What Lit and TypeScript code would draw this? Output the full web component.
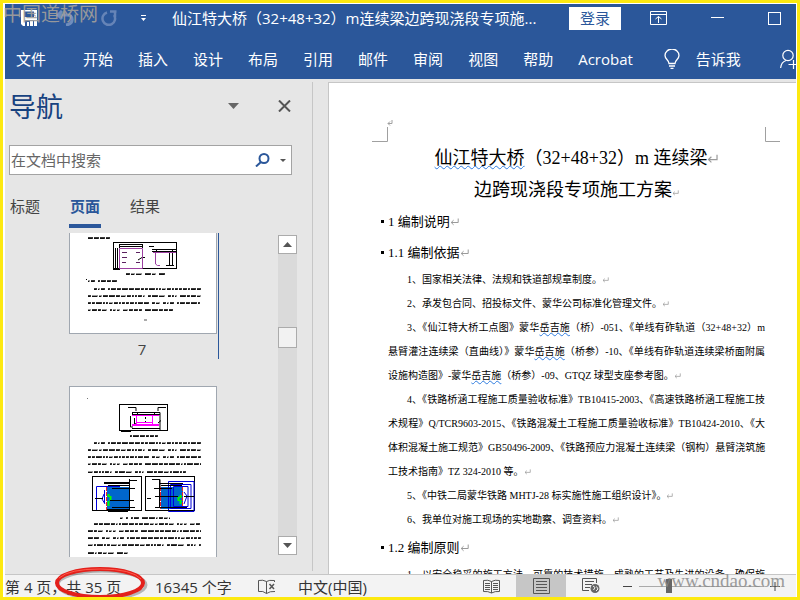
import { LitElement, html, svg, css } from "lit";
import { customElement } from "lit/decorators.js";

const MENU = ["开始", "插入", "设计", "布局", "引用", "邮件", "审阅", "视图", "帮助", "Acrobat"];

const mark = (size = "small") => html`<svg class="mark ${size}" viewBox="0 0 9 8" aria-hidden="true">
  <path d="M8.2 0.5V4.5H1.2M3.6 2.2L1.2 4.5L3.6 6.8" fill="none" stroke="#9a9a9a" stroke-width="1" /></svg>`;

/* A run of miniature text: short dark strokes of varied length. */
const scribble = (x1: number, x2: number, y: number) => {
  const dashes = [];
  let x = x1;
  let seed = y * 7 + x1;
  while (x < x2) {
    seed = (seed * 37 + 11) % 101;
    const w = Math.min(2 + (seed % 5), x2 - x);
    dashes.push(svg`<rect x=${x} y=${y - 1} width=${w} height="2" fill=${seed % 4 ? "#3a3a3a" : "#9a9a9a"} />
      <rect x=${x} y=${y} width=${Math.max(w - 1, 1)} height="1" fill="#111" />`);
    x += w + (seed % 6 === 0 ? 3 : 1);
  }
  return dashes;
};

const pageSeven = svg`
  ${scribble(18, 40, 5)}
  <g fill="none" stroke="#000">
    <rect x="43.5" y="9.5" width="63" height="26" />
    <path d="M49 11.5H73M49 13.5H73M49.5 11V15M72.5 11V15M45.5 15V37M47.5 15V36M43 36.5H50M68 27L72 24.5H75M79 13.5H84M82 16.5H107M82 18.5H107M86.5 16V20M102.5 16V20M99.500 20V33M102.5 20V33M96 32.500H104" />
    <path d="M52 19.500H57M66 19.500H70M52 24.500H57M52 29.500H56M66 29.500H70" stroke="#5b2260" />
  </g>
  <path d="M49.500 15.500H72.500V35.500H49.500ZM83 19.500H106M85.500 20V31L87.500 32.500H90" fill="none" stroke="#9b3fa0" />
  ${scribble(56, 96, 41)}
  <rect x="16" y="46" width="1" height="1" /><g>${scribble(18, 47, 48)}</g>
  ${scribble(24, 131, 56)}${scribble(18, 131, 63)}${scribble(18, 130, 70)}${scribble(18, 103, 77)}
  <rect x="74" y="86" width="3" height="2" fill="#aaa" />`;

const pageEight = svg`
  <rect x="17" y="11" width="1" height="1" fill="#777" />
  <g fill="none" stroke="#000">
    <rect x="49.500" y="17.500" width="48" height="26" />
    <path d="M58 20.500H66V24M96 20.500H88V24M62 25.500H90V43M62.500 25V29M62 27.500H90M60.500 29V40H63M64.500 31V38L67 35M62 41.500H90M67.500 25V29M84.500 25V29M75.500 30V32M75.500 34V36M88 36L91 33.500M51 44.500H61" />
  </g>
  <path d="M62 28.500H89M66.500 29V37M82.500 29V37M67 35.500H82M62 37.500H89M62 38.500H89" fill="none" stroke="#f0f" />
  ${scribble(60, 88, 49)}
  ${scribble(24, 131, 56)}${scribble(18, 131, 63)}${scribble(18, 131, 70)}${scribble(18, 131, 77)}${scribble(18, 117, 85)}
  <g fill="none" stroke="#000"><rect x="22.500" y="89.500" width="49" height="34" /><rect x="75.500" y="89.500" width="49" height="34" /></g>
  <rect x="37" y="100" width="22" height="22" fill="#0066cc" />
  <rect x="91" y="100" width="22" height="22" fill="#0066cc" />
  <path d="M36.500 100V123M59.500 100V122M90.500 100V122M112.500 100V122" stroke="#e22" stroke-dasharray="4 1" />
  <path d="M38.500 107V110M40.500 109V114M38.500 114V119M110.500 108V111M108.500 110V114M110.500 113V117" stroke="#0f0" stroke-width="2" />
  <path d="M26.500 123V99.500H50M34.500 103V116M98.500 94.500H124V124.500H98.500ZM100.500 97.500H121V121.500H100.500ZM103.500 99.500H118V119.500H103.500ZM34 107L32 112L35 117M114 105L117 109L114 117" fill="none" stroke="#00d" />
  <path d="M34 95.500H60M34 96.500H60M38 98.500H59M59.500 92V124M59.500 93.500H67M42 101.500H65M25 111.500H33M40 113.500H64M42 120.500H65M37 122.500H60M38 124.500H58M82 92.500H90V100M89 96.500H113M91 98.500H112M84 101.500H102M77 111.500H81M85 109.500H108M85 120.500H117M89.500 93V121M91 123.500H112M114 109.500H124" fill="none" stroke="#000" />
  ${scribble(50, 100, 131)}
  ${scribble(24, 131, 137)}${scribble(18, 131, 144)}${scribble(18, 131, 151)}${scribble(18, 131, 158)}${scribble(18, 59, 166)}`;

@customElement("word-ribbon")
class WordRibbon extends LitElement {
  static styles = css`
    :host { display: block; background: #2b579a; color: #fff; font: 15px/20px "Open Sans", "Noto Sans CJK SC", sans-serif; }
    button { background: none; border: 0; padding: 0; margin: 0; color: inherit; font: inherit; display: block; white-space: nowrap; }
    svg { display: block; }
    .title { display: flex; align-items: center; height: 28px; padding: 0 15px 0 16px; }
    .quick { display: flex; align-items: center; width: 151px; flex: none; }
    .undo { margin-left: 18px; }
    .redo { margin-left: 26px; }
    .more { margin-left: 23px; }
    .name { flex: 1; min-width: 0; white-space: nowrap; overflow: hidden; font: inherit; margin: 0; }
    .login { background: #fff; color: #2b579a; width: 52px; height: 23px; line-height: 22px; }
    .win { margin-left: 44px; }
    .display { margin-left: 29px; }
    .menu { display: flex; align-items: center; height: 40px; padding: 7px 0 0 11px; }
    .tabs { display: flex; gap: 25px; margin-left: 37px; }
    .tell { display: flex; align-items: center; gap: 16px; margin-left: 31px; }
    .share { margin-left: auto; }
  `;
  render() {
    return html`
      <div class="title">
        <div class="quick">
          <button aria-label="保存"><svg width="16" height="16" viewBox="0 0 16 16"><path fill="#fff" fill-rule="evenodd" d="M0 0H16V16H13V10H4V16H2L0 14ZM3 1.500V7H13V1.500ZM6 12H8V16H6ZM9 11H12V16H9Z" /></svg></button>
          <button class="undo" aria-label="撤消"><svg width="20" height="16" viewBox="0 0 20 16" fill="none" stroke="#6f8dbd" stroke-width="3"><path d="M3 5H12C19 5 19 14 11 15M7 1L3 5L7 9" /></svg></button>
          <button class="redo" aria-label="重复"><svg width="17" height="16" viewBox="0 0 17 16" fill="none" stroke="#6684b7" stroke-width="2.500"><path d="M6 2.500A6.300 6.300 0 1 0 13 5M9 1.500H15.500M14 1V7" /></svg></button>
          <button class="more" aria-label="自定义快速访问工具栏"><svg width="5" height="6" viewBox="0 0 5 6" fill="#fff"><path d="M0 0H5V1H0ZM0 3H5L2.500 6Z" /></svg></button>
        </div>
        <h1 class="name">仙江特大桥（32+48+32）m连续梁边跨现浇段专项施...</h1>
        <button class="login">登录</button>
        <button class="display" aria-label="功能区显示选项"><svg width="17" height="14" viewBox="0 0 17 14" fill="none" stroke="#fff"><path d="M.5.5H16.500V13.500H.5ZM1 3.500H16M8.500 12V5.500M5.500 8L8.500 5.500L11.500 8" /></svg></button>
        <button class="win" aria-label="最小化"><svg width="13" height="12" viewBox="0 0 13 12"><path fill="#fff" d="M0 5H13V6H0Z" /></svg></button>
        <button class="win" aria-label="最大化"><svg width="13" height="13" viewBox="0 0 13 13"><rect x=".5" y=".5" width="12" height="12" fill="none" stroke="#fff" /></svg></button>
      </div>
      <nav class="menu">
        <button>文件</button>
        <div class="tabs">${MENU.map((m) => html`<button>${m}</button>`)}</div>
        <button class="tell"><svg width="16" height="20" viewBox="0 0 16 20" fill="none" stroke="#fff" stroke-width="1.300"><path d="M5 14.500C5 11 1 10.500 1 6.500A6.500 6 0 0 1 15 6.500C15 10.500 11 11 11 14.500ZM5 17H11M6.500 19.300H9.500" /></svg>告诉我</button>
        <button class="share" aria-label="共享"><svg width="16" height="20" viewBox="0 0 16 20" fill="none" stroke="#fff" stroke-width="1.200"><circle cx="8" cy="6.500" r="5.200" /><path d="M.6 19C1 15 3 12.500 6 11.500M8.500 15.500H16M13.500 11V20" /></svg></button>
      </nav>`;
  }
}

@customElement("nav-pane")
class NavPane extends LitElement {
  static styles = css`
    :host { display: flex; flex-direction: column; min-height: 0; box-sizing: border-box; padding-left: 4px; font: 15px/20px "Open Sans", "Noto Sans CJK SC", sans-serif; color: #444; border-right: 1px solid #c6c6c6; margin-bottom: 3px; }
    button { background: none; border: 0; padding: 0; margin: 0; color: inherit; font: inherit; display: block; }
    svg { display: block; }
    .head { display: flex; align-items: center; height: 40px; padding: 4px 21px 0 0; }
    h2 { flex: 1; margin: 0; font: 27px/40px "Noto Sans CJK SC", sans-serif; color: #17427f; }
    .close { margin-left: 39px; }
    .search { display: flex; align-items: center; box-sizing: border-box; height: 30px; margin: 19px 20px 0 0; border: 1px solid #a3a3a3; background: #fff; padding-right: 5px; }
    input { flex: 1; min-width: 0; border: 0; outline: 0; padding: 0 1px; background: none; font: inherit; }
    input::placeholder { color: #666; opacity: 1; }
    .drop { margin-left: 10px; }
    .tabs { display: flex; gap: 28px; margin-top: 21px; }
    .tab { width: 32px; height: 32px; padding-bottom: 12px; box-sizing: border-box; white-space: nowrap; text-align: center; }
    .active { color: #2b579a; font-weight: 700; border-bottom: 4px solid #2b579a; padding-bottom: 8px; }
    .list { display: flex; justify-content: space-between; flex: 1; min-height: 0; margin: 5px 15px 14px 60px; }
    .pages { overflow: hidden; }
    .group { border-right: 1px solid #2b579a; padding-right: 1px; height: 126px; }
    .sheet { background: #fff; border: 1px solid #a0a7b0; width: 148px; box-sizing: border-box; }
    .sheet svg { width: 146px; }
    .first { border-top: 0; }
    .number { display: block; text-align: center; line-height: 30px; width: 146px; }
    .second { margin-top: 27px; }
    .bar { display: flex; flex-direction: column; width: 19px; background: #dadada; margin: 2px 0; }
    .arrow { display: grid; place-items: center; width: 19px; height: 19px; flex: none; box-sizing: border-box; background: #fff; border: 1px solid #ababab; }
    .grip { margin: 73px 0 auto; height: 21px; box-sizing: border-box; background: #f2f2f2; border: 1px solid #ababab; }
  `;
  render() {
    return html`
      <div class="head">
        <h2>导航</h2>
        <button aria-label="任务窗格选项"><svg width="11" height="6" viewBox="0 0 11 6"><path fill="#666" d="M0 0H11L5.500 6Z" /></svg></button>
        <button class="close" aria-label="关闭"><svg width="13" height="12" viewBox="0 0 13 12" fill="none" stroke="#555" stroke-width="2"><path d="M1 .5L12 11.500M12 .5L1 11.500" /></svg></button>
      </div>
      <div class="search">
        <input type="text" aria-label="在文档中搜索" placeholder="在文档中搜索" />
        <button aria-label="搜索"><svg width="15" height="14" viewBox="0 0 15 14" fill="none" stroke="#2b579a" stroke-width="2"><circle cx="9" cy="5.500" r="4.500" /><path d="M6 9L1 13.500" /></svg></button>
        <button class="drop" aria-label="搜索选项"><svg width="6" height="3" viewBox="0 0 6 3"><path fill="#555" d="M0 0H6L3 3Z" /></svg></button>
      </div>
      <div class="tabs"><button class="tab">标题</button><button class="tab active">页面</button><button class="tab">结果</button></div>
      <div class="list">
        <div class="pages">
          <div class="group">
            <button class="sheet first" aria-label="第 7 页"><svg height="100" viewBox="0 0 146 100">${pageSeven}</svg></button>
            <span class="number">7</span>
          </div>
          <button class="sheet second" aria-label="第 8 页"><svg height="206" viewBox="0 0 146 206">${pageEight}</svg></button>
        </div>
        <div class="bar">
          <button class="arrow" aria-label="向上"><svg width="9" height="5" viewBox="0 0 9 5"><path fill="#555" d="M0 5H9L4.500 0Z" /></svg></button>
          <div class="grip"></div>
          <button class="arrow" aria-label="向下"><svg width="9" height="5" viewBox="0 0 9 5"><path fill="#555" d="M0 0H9L4.500 5Z" /></svg></button>
        </div>
      </div>`;
  }
}

@customElement("doc-page")
class DocPage extends LitElement {
  static styles = css`
    :host { display: block; min-height: 0; overflow: hidden; background: #fff; color: #000; border: solid #c6c6c6; border-width: 1px 0 0 1px; font: 10px/24px "Liberation Serif", "Noto Sans CJK SC", serif; }
    .corners { display: flex; justify-content: space-between; padding: 36px 16px 0 43px; }
    .corners svg { display: block; }
    article { padding: 0 31px 0 59px; }
    h1 { margin: 0; font-size: 18px; line-height: 32px; font-weight: 400; text-align: center; white-space: nowrap; }
    h2 { margin: 0 0 0 -7px; font-size: 13px; line-height: 31px; font-weight: 400; display: flex; align-items: center; white-space: nowrap; }
    h2::before { content: ""; width: 3px; height: 3px; background: #000; margin-right: 4px; }
    p { margin: 0; white-space: nowrap; }
    .in { display: block; text-indent: 19px; }
    .line { display: block; }
    .full { text-align-last: justify; }
    .wavy { text-decoration: underline wavy #2f7de0 1px; text-underline-offset: 1px; }
    .mark { width: 7px; height: 6px; }
    .medium { width: 9px; height: 8px; }
    .big { width: 11px; height: 10px; }
  `;
  render() {
    const name = html`<span class="wavy">岳吉施</span>`;
    return html`
      <div class="corners">
        <svg width="21" height="23" viewBox="0 0 21 23" fill="none" stroke="#a0a0a0"><path d="M0 22.500H15.500V8M20 1V4.500H16M18 2.500L16 4.500L18 6.500" /></svg>
        <svg width="15" height="23" viewBox="0 0 15 23" fill="none" stroke="#a0a0a0"><path d="M.5 8V22.500H15" /></svg>
      </div>
      <article>
        <h1><span class="wavy">仙江特大桥</span>（32+48+32）m 连续梁${mark("big")}<br />边跨现浇段专项施工方案${mark()}</h1>
        <h2>1 编制说明${mark("medium")}</h2>
        <h2>1.1 编制依据${mark("medium")}</h2>
        <p class="in">1、国家相关法律、法规和铁道部规章制度。${mark()}</p>
        <p class="in">2、承发包合同、招投标文件、蒙华公司标准化管理文件。${mark()}</p>
        <p>
          <span class="in full">3、《仙江特大桥工点图》蒙华${name}（桥）-051、《单线有砟轨道（32+48+32）m</span>
          <span class="line full">悬臂灌注连续梁（直曲线）》蒙华${name}（桥参）-10、《单线有砟轨道连续梁桥面附属</span>
          <span class="line">设施构造图》-蒙华${name}（桥参）-09、GTQZ 球型支座参考图。${mark()}</span>
        </p>
        <p>
          <span class="in full">4、《铁路桥涵工程施工质量验收标准》TB10415-2003、《高速铁路桥涵工程施工技</span>
          <span class="line full">术规程》Q/TCR9603-2015、《铁路混凝土工程施工质量验收标准》TB10424-2010、《大</span>
          <span class="line full">体积混凝土施工规范》GB50496-2009、《铁路预应力混凝土连续梁（钢构）悬臂浇筑施</span>
          <span class="line">工技术指南》TZ 324-2010 等。${mark()}</span>
        </p>
        <p class="in">5、《中铁二局蒙华铁路 MHTJ-28 标实施性施工组织设计》。${mark()}</p>
        <p class="in">6、我单位对施工现场的实地勘察、调查资料。${mark()}</p>
        <h2>1.2 编制原则${mark("medium")}</h2>
        <p class="in full">1、以安全稳妥的施工方法、可靠的技术措施、成熟的工艺及先进的设备、确保施</p>
      </article>`;
  }
}

@customElement("status-bar")
class StatusBar extends LitElement {
  static styles = css`
    :host { display: flex; align-items: center; box-sizing: border-box; height: 23px; background: #f3f3f3; border-top: 1px solid #c6c6c6; color: #333; font: 15px/20px "Open Sans", "Noto Sans CJK SC", sans-serif; white-space: nowrap; }
    button { background: none; border: 0; padding: 0; margin: 0; color: inherit; font: inherit; line-height: 24px; height: 22px; display: grid; place-items: center; }
    .pages, .words { width: 150px; justify-content: start; }
    .words { width: 103px; }
    .lang { margin-left: 22px; }
    .view { width: 50px; }
    .first { margin-left: auto; }
    .on { background: #c6c6c6; }
    .minus { margin-left: 7px; }
    .zoom { appearance: none; width: 125px; height: 14px; margin: 0 6px 0 7px; background: linear-gradient(#aaa, #aaa) center / 100% 1px no-repeat; }
    .zoom::-webkit-slider-thumb { appearance: none; width: 6px; height: 14px; background: #666; border: 0; border-radius: 0; }
    .plus { margin-right: 16px; }
  `;
  render() {
    return html`
      <button class="pages">第 4 页，共 35 页</button>
      <button class="words">16345 个字</button>
      <button aria-label="校对"><svg width="18" height="15" viewBox="0 0 18 15" fill="none" stroke="#555"><path d="M8.500 14.500V2.500Q5 .5.500 1.500V12.500Q5 11.500 8.500 14.500Q12 12 17 12.500M8.500 2.500Q11 .8 16.500 1.500V3" /><path d="M11.500 5L16 10M16 5L11.500 10" stroke-width="1.500" /></svg></button>
      <button class="lang">中文(中国)</button>
      <button class="view first" aria-label="阅读视图"><svg width="17" height="15" viewBox="0 0 17 15" fill="none" stroke="#555"><path d="M8.500 14V2.500Q5 .5.500 1.500V12.500Q5 12 8.500 14Q12 12 16.500 12.500V1.500Q12 .5 8.500 2.500M2 4.500H7M2 6.500H7M2 8.500H7M2 10.500H7M10 4.500H15M10 6.500H15M10 8.500H15M10 10.500H15" /></svg></button>
      <button class="view on" aria-label="页面视图"><svg width="17" height="16" viewBox="0 0 17 16" fill="none" stroke="#555"><path d="M.5.500H16.500V15.500H.5ZM3 3.500H14M3 6.500H14M3 9.500H14M3 12.500H14" /></svg></button>
      <button class="view" aria-label="Web 版式视图"><svg width="18" height="16" viewBox="0 0 18 16" fill="none" stroke="#555"><path d="M7 12.500H.5V.5H14.500V5M3 3.500H12M3 6.500H10M3 9.500H8" /><circle cx="13" cy="10.500" r="4.500" fill="#666" stroke="none" /><path d="M11 8L13 9.500L11.500 12M14.500 8.500L16 11L14 13" stroke="#f3f3f3" /></svg></button>
      <button class="minus" aria-label="缩小"><svg width="9" height="9" viewBox="0 0 9 9"><path fill="#444" d="M0 4H9V5H0Z" /></svg></button>
      <input class="zoom" type="range" min="0" max="100" value="23" aria-label="缩放" />
      <button class="plus" aria-label="放大"><svg width="10" height="9" viewBox="0 0 10 9"><path d="M0 4.500H10M5 0V9" stroke="#444" /></svg></button>`;
  }
}

@customElement("app-root")
class AppRoot extends LitElement {
  static styles = css`
    :host { position: relative; display: flex; flex-direction: column; box-sizing: border-box; height: 100vh; overflow: hidden; border: 3px solid #fde910; padding: 1px 1px 0 2px; background: #fff; }
    word-ribbon, status-bar { flex: none; }
    main { flex: 1; min-height: 0; display: grid; grid-template: minmax(0, 1fr) / 308px minmax(0, 1fr); column-gap: 15px; background: #e6e6e6; padding-top: 3px; }
    .stamp, .site, .ring { position: absolute; pointer-events: none; white-space: nowrap; }
    .stamp { left: 0; top: -2px; font: 19px/24px "Noto Sans CJK SC", sans-serif; color: #a3a09c; opacity: 0.9; }
    .site { right: 12px; bottom: 4px; font: 19px/24px "Liberation Serif", serif; color: #8c8c8c; opacity: 0.85; }
    .ring { left: 51px; bottom: -3px; }
  `;
  render() {
    return html`
      <word-ribbon></word-ribbon>
      <main><nav-pane></nav-pane><doc-page></doc-page></main>
      <status-bar></status-bar>
      <div class="stamp">中国道桥网</div>
      <div class="site">www.cndao.com</div>
      <svg class="ring" width="98" height="34" viewBox="0 0 98 34" fill="none">
        <ellipse cx="48" cy="19" rx="44" ry="14" stroke="#000" stroke-opacity=".25" stroke-width="3" />
        <ellipse cx="46" cy="17" rx="43" ry="14" stroke="#e3201b" stroke-width="4" />
        <path d="M5 12Q15 3 46 3Q78 3 87 13" stroke="#ff5a4c" stroke-width="1" />
      </svg>`;
  }
}
